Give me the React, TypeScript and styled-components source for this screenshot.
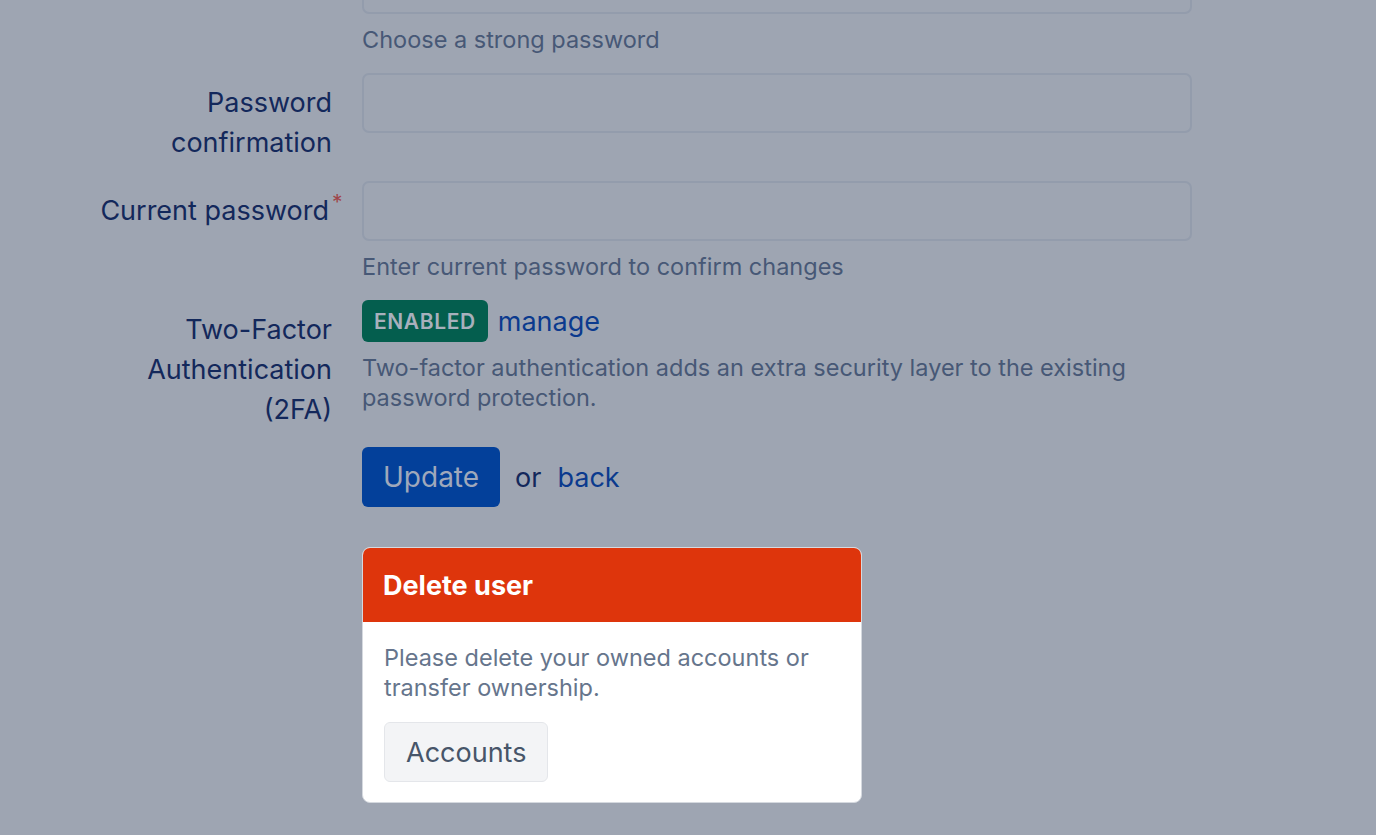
import React from "react";
import styled, { createGlobalStyle } from "styled-components";

const GlobalStyle = createGlobalStyle`
  html, body {
    margin: 0;
    padding: 0;
    background: #9ea5b2;
    font-family: "Inter", "Noto Sans", "Liberation Sans", sans-serif;
  }
  * {
    box-sizing: border-box;
  }
`;

const Page = styled.div`
  height: 835px;
  overflow: hidden;
  background: #9ea5b2;
`;

const Form = styled.div`
  display: grid;
  grid-template-columns: 332px 830px;
  column-gap: 30px;
  row-gap: 18px;
  margin-top: -46px;
`;

const Label = styled.div`
  text-align: right;
  font-size: 27px;
  line-height: 40px;
  color: #13285b;
  padding-top: 10px;
  padding-left: 92px;
`;

const Required = styled.span`
  display: inline-block;
  width: 0;
  color: #a0454a;
  font-size: 21px;
  line-height: 20px;
  vertical-align: top;
  margin-top: 2px;
  padding-left: 3px;
`;

const Field = styled.div`
  display: flex;
  flex-direction: column;
  align-items: flex-start;
`;

const Input = styled.div`
  width: 830px;
  height: 60px;
  border: 2px solid #939cac;
  border-radius: 7px;
`;

const Hint = styled.div`
  margin-top: 11px;
  font-size: 23.5px;
  line-height: 30px;
  color: #475876;
`;

const InlineRow = styled.div`
  display: flex;
  align-items: center;
  gap: 10px;
`;

const Badge = styled.span`
  display: inline-flex;
  align-items: center;
  height: 42px;
  padding: 0 12px;
  border-radius: 6px;
  background: #045e4e;
  color: #a8b0bc;
  font-size: 21px;
  font-weight: 600;
  letter-spacing: 0.6px;
`;

const TextLink = styled.a`
  color: #0b3a8e;
  font-size: 27px;
  text-decoration: none;
  cursor: pointer;
`;

const Actions = styled.div`
  display: flex;
  align-items: center;
  margin-top: -1px;
  font-size: 27px;
  color: #13285b;
`;

const PrimaryButton = styled.button`
  height: 60px;
  padding: 0 21px;
  border: none;
  border-radius: 6px;
  background: #03409a;
  color: #9fa8bb;
  font-family: inherit;
  font-size: 28px;
  margin-right: 15px;
`;

const Or = styled.span`
  margin-right: 16px;
`;

const Card = styled.div`
  margin-top: 40px;
  width: 500px;
  border: 1px solid #d5d9df;
  border-radius: 8px;
  overflow: hidden;
  background: #ffffff;
`;

const CardHeader = styled.div`
  height: 74px;
  display: flex;
  align-items: center;
  padding: 0 20px;
  background: #de350c;
  color: #ffffff;
  font-size: 27px;
  font-weight: 700;
`;

const CardBody = styled.div`
  padding: 21px 21px 20px;
`;

const CardText = styled.p`
  margin: 0 0 19px;
  font-size: 23.5px;
  line-height: 30px;
  color: #66758c;
`;

const SecondaryButton = styled.button`
  height: 60px;
  padding: 0 21px;
  border: 1px solid #e4e6ea;
  border-radius: 6px;
  background: #f3f4f6;
  color: #475569;
  font-family: inherit;
  font-size: 27px;
`;

export default function App() {
  return (
    <>
      <GlobalStyle />
      <Page>
        <Form>
          <Label />
          <Field>
            <Input />
            <Hint>Choose a strong password</Hint>
          </Field>

          <Label>Password confirmation</Label>
          <Field>
            <Input />
          </Field>

          <Label>
            Current password<Required>*</Required>
          </Label>
          <Field>
            <Input />
            <Hint>Enter current password to confirm changes</Hint>
          </Field>

          <Label>Two-Factor Authentication (2FA)</Label>
          <Field>
            <InlineRow>
              <Badge>ENABLED</Badge>
              <TextLink>manage</TextLink>
            </InlineRow>
            <Hint>
              Two-factor authentication adds an extra security layer to the
              existing password protection.
            </Hint>
          </Field>

          <div />
          <Field>
            <Actions>
              <PrimaryButton>Update</PrimaryButton>
              <Or>or</Or>
              <TextLink>back</TextLink>
            </Actions>
            <Card>
              <CardHeader>Delete user</CardHeader>
              <CardBody>
                <CardText>
                  Please delete your owned accounts or transfer ownership.
                </CardText>
                <SecondaryButton>Accounts</SecondaryButton>
              </CardBody>
            </Card>
          </Field>
        </Form>
      </Page>
    </>
  );
}
